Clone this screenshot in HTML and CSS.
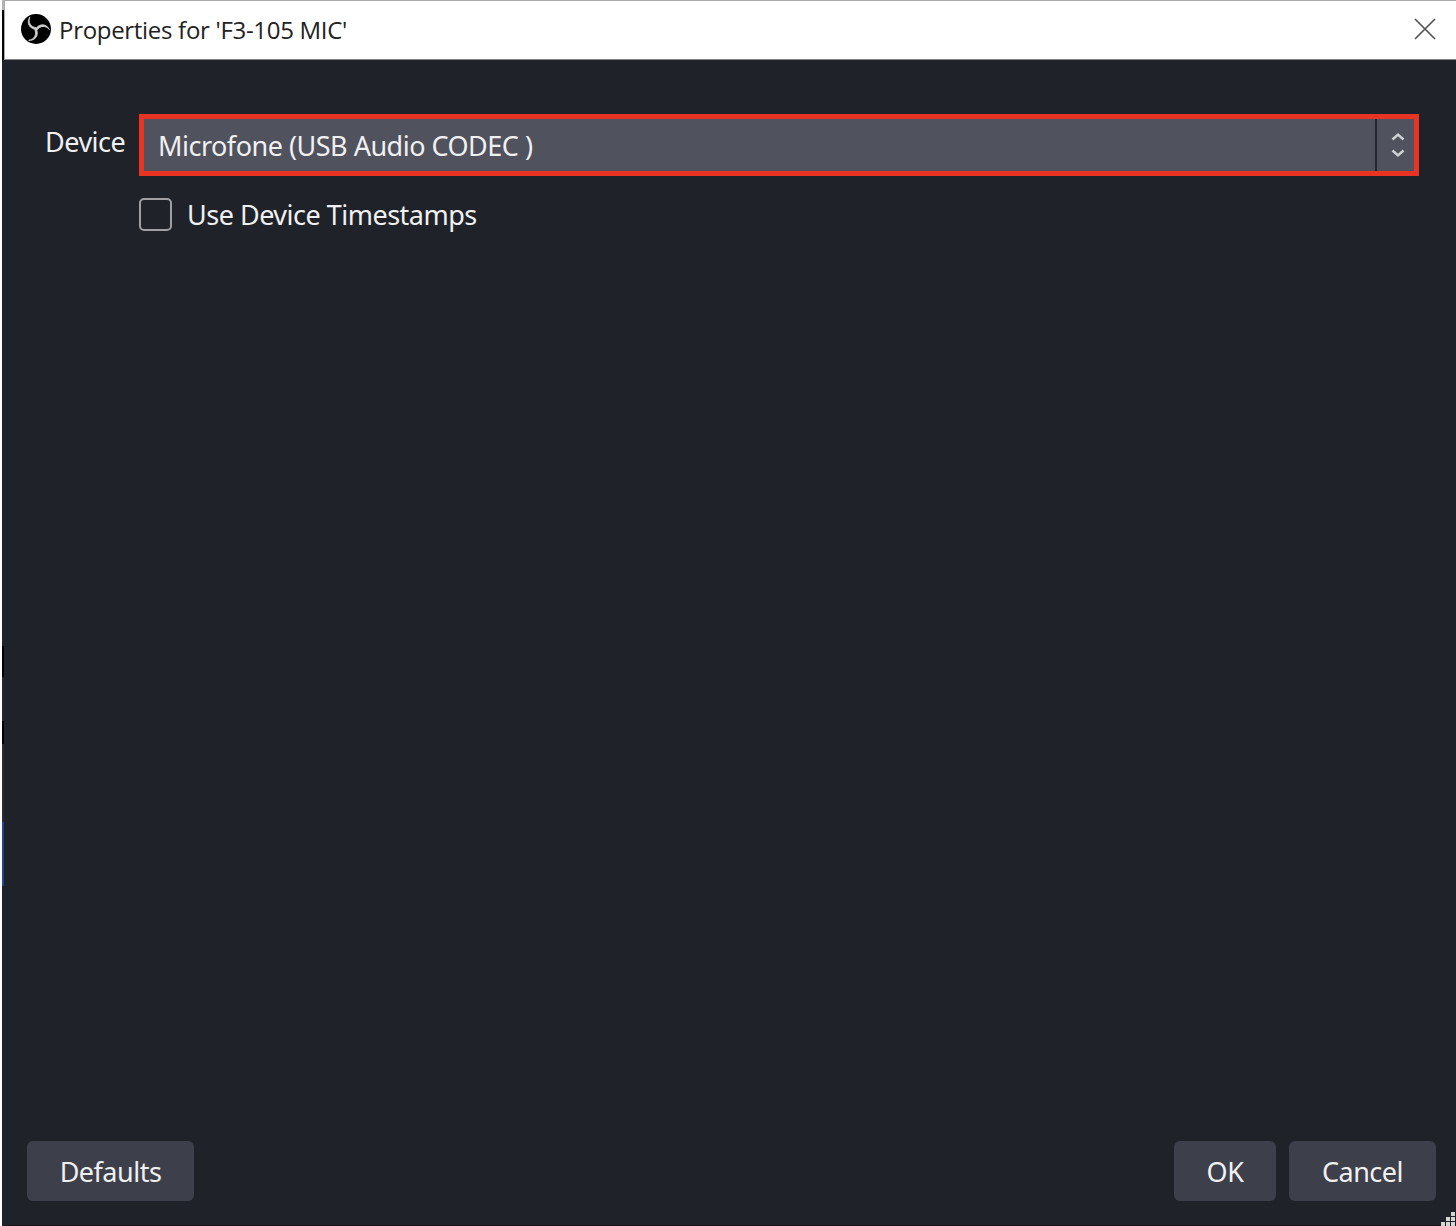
FILE: index.html
```html
<!DOCTYPE html>
<html lang="en">

<head>
    <meta charset="UTF-8">
    <meta name="viewport" content="width=device-width, initial-scale=1.0">
    <title>Properties for 'F3-105 MIC'</title>
    <link rel="stylesheet" href="styles.css">
</head>

<body>
    <div class="edge"></div>
    <div class="window">
        <header class="titlebar">
            <svg class="logo" viewBox="0 0 30 30">
                <circle cx="15" cy="15" r="15" fill="#000" />
                <g fill="#d0d0d0" stroke="#d0d0d0" stroke-width="0.8" stroke-linejoin="round">
                    <path d="M15.3 15.2C10.5 15.6 4.2 10.5 8.8 3C6.8 8.6 9.8 13 15.3 13.7Z" />
                    <path d="M15.3 15.2C10.5 15.6 4.2 10.5 8.8 3C6.8 8.6 9.8 13 15.3 13.7Z" transform="rotate(120 15 15)" />
                    <path d="M15.3 15.2C10.5 15.6 4.2 10.5 8.8 3C6.8 8.6 9.8 13 15.3 13.7Z" transform="rotate(240 15 15)" />
                </g>
            </svg>
            <span class="title">Properties for 'F3-105 MIC'</span>
            <svg class="close" viewBox="0 0 22 22">
                <path d="M1 1L21 21M21 1L1 21" fill="none" stroke="#555" stroke-width="1.7" />
            </svg>
        </header>

        <main class="content">
            <div class="row">
                <label class="label">Device</label>
                <div class="select">
                    <span class="value">Microfone (USB Audio CODEC )</span>
                    <span class="arrows">
                        <svg viewBox="0 0 14 26">
                            <path d="M1.5 7.5L7 2.5L12.5 7.5M1.5 18.5L7 23.5L12.5 18.5" fill="none" stroke="#d0d1d4" stroke-width="2.4" />
                        </svg>
                    </span>
                </div>
            </div>
            <div class="check-row">
                <span class="checkbox"></span>
                <span class="check-label">Use Device Timestamps</span>
            </div>
        </main>

        <footer class="buttons">
            <button class="defaults">Defaults</button>
            <button class="ok">OK</button>
            <button class="cancel">Cancel</button>
        </footer>

        <svg class="grip" viewBox="0 0 16 14">
            <path d="M11 0h4v4h-4zM6 5h4v4h-4zM11 5h4v4h-4zM1 10h4v4h-4zM6 10h4v4h-4zM11 10h4v4h-4z" fill="#d5d5d6" />
        </svg>
    </div>
</body>

</html>
```
FILE: styles.css
```css
* {
    box-sizing: border-box;
}

body {
    margin: 0;
    height: 1226px;
    display: flex;
    overflow: hidden;
    background: #fff;
    font-family: "Noto Sans", "Open Sans", sans-serif;
    font-size: 27px;
    letter-spacing: -0.5px;
    color: #f0f0f1;
}

/* strip of the desktop behind the window */
.edge {
    width: 2px;
    margin-left: 2px;
    background: linear-gradient(#b5b5b5 0 10px, #050506 10px 60px, #1f2229 60px 646px,
        #000 646px 677px, #25272d 677px 721px, #000 721px 744px, #2c2d31 744px 822px,
        #26439b 822px 886px, #1f2229 886px);
}

.window {
    flex: 1;
    position: relative;
    display: flex;
    flex-direction: column;
    background: #1f2229;
    border-bottom: 1px solid #14161b;
}

.titlebar {
    height: 60px;
    display: flex;
    align-items: center;
    padding: 0 20px 2px 16px;
    background: #fff;
    border-top: 1px solid #aaa;
    border-left: 1px solid #aaa;
    border-bottom: 1px solid #85868a;
    color: #222;
}

.logo {
    width: 30px;
    height: 30px;
    margin-right: 8px;
}

.title {
    font-family: "Open Sans", sans-serif;
    font-size: 24px;
    letter-spacing: -0.3px;
    line-height: 34px;
    padding-top: 1px;
    white-space: nowrap;
}

.close {
    width: 22px;
    height: 22px;
    margin-left: auto;
}

.content {
    flex: 1;
    padding: 54px 37px 0 41px;
}

.row {
    display: flex;
}

.label {
    width: 94px;
    line-height: 56px;
}

.select {
    flex: 1;
    height: 62px;
    display: flex;
    background: #50525d;
    border: 5px solid #e93323;
}

.value {
    flex: 1;
    padding-left: 14px;
    line-height: 54px;
    white-space: pre;
}

.arrows {
    width: 39px;
    display: flex;
    align-items: center;
    justify-content: center;
    border-left: 2px solid #25272f;
    padding-left: 4px;
}

.arrows svg {
    width: 14px;
    height: 26px;
}

.check-row {
    display: flex;
    align-items: center;
    height: 33px;
    margin: 22px 0 0 94px;
}

.checkbox {
    width: 33px;
    height: 33px;
    margin-right: 15px;
    border: 2px solid #a09fa3;
    border-radius: 5px;
}

.buttons {
    display: flex;
    padding: 0 20px 24px 23px;
}

button {
    height: 60px;
    padding: 0;
    border: none;
    border-radius: 6px;
    background: #3d3f4a;
    font: inherit;
    letter-spacing: inherit;
    color: inherit;
}

.defaults {
    width: 167px;
    margin-right: auto;
}

.ok {
    width: 102px;
    margin-right: 13px;
}

.cancel {
    width: 147px;
}

.grip {
    position: absolute;
    right: 0;
    bottom: -1px;
    width: 16px;
    height: 14px;
}
```
